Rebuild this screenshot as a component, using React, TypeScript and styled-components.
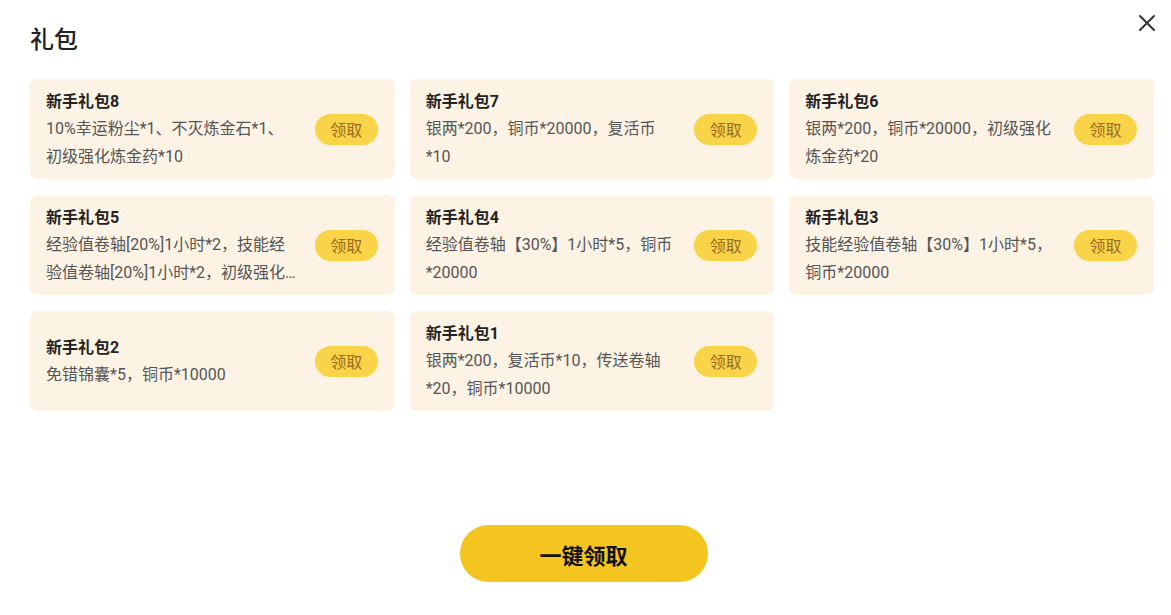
import * as React from "react";
import styled, { createGlobalStyle } from "styled-components";

const GlobalStyle = createGlobalStyle`
  html, body {
    margin: 0;
    padding: 0;
    background: #ffffff;
  }
  body {
    font-family: Roboto, "Noto Sans CJK SC", "Noto Sans", sans-serif;
    color: #222222;
  }
`;

const Page = styled.div`
  position: relative;
  box-sizing: border-box;
  min-height: 100vh;
  display: flex;
  flex-direction: column;
  padding: 24px 17px 33px 30px;
`;

const Header = styled.h1`
  margin: 0 0 23px;
  font-size: 24px;
  line-height: 32px;
  font-weight: 500;
  color: #222222;
`;

const CloseButton = styled.button`
  position: absolute;
  top: 13px;
  right: 14px;
  width: 20px;
  height: 20px;
  padding: 0;
  border: 0;
  background: transparent;
  display: flex;
  align-items: center;
  justify-content: center;
  cursor: pointer;
`;

const Grid = styled.div`
  display: grid;
  grid-template-columns: repeat(3, 1fr);
  column-gap: 15px;
  row-gap: 16px;
`;

const Card = styled.div`
  box-sizing: border-box;
  height: 100px;
  display: flex;
  align-items: center;
  padding: 2px 17px 0 16px;
  background-color: #fcf3e5;
  border-radius: 7px;
`;

const Info = styled.div`
  flex: 0 1 250px;
  min-width: 0;
`;

const Name = styled.div`
  font-size: 16px;
  line-height: 26px;
  font-weight: 700;
  color: #222222;
`;

const Desc = styled.div`
  font-size: 16px;
  line-height: 28px;
  color: #555555;
  display: -webkit-box;
  -webkit-line-clamp: 2;
  -webkit-box-orient: vertical;
  overflow: hidden;
`;

const ClaimButton = styled.button`
  flex: 0 0 auto;
  margin-left: auto;
  margin-bottom: 2px;
  width: 63px;
  height: 31px;
  padding: 0;
  border: 0;
  border-radius: 16px;
  background-color: #f9d348;
  color: #9a6d1e;
  font-family: inherit;
  font-size: 16px;
  cursor: pointer;
`;

const Footer = styled.div`
  margin-top: auto;
  display: flex;
  justify-content: center;
  padding-right: 17px;
`;

const ClaimAll = styled.button`
  width: 248px;
  height: 57px;
  border: 0;
  border-radius: 29px;
  background-color: #f4c420;
  color: #111111;
  font-family: inherit;
  font-size: 22px;
  font-weight: 700;
  cursor: pointer;
`;

type Gift = { name: string; desc: string };

const gifts: Gift[] = [
  { name: "新手礼包8", desc: "10%幸运粉尘*1、不灭炼金石*1、初级强化炼金药*10" },
  { name: "新手礼包7", desc: "银两*200，铜币*20000，复活币*10" },
  { name: "新手礼包6", desc: "银两*200，铜币*20000，初级强化炼金药*20" },
  {
    name: "新手礼包5",
    desc: "经验值卷轴[20%]1小时*2，技能经验值卷轴[20%]1小时*2，初级强化炼金药*10",
  },
  { name: "新手礼包4", desc: "经验值卷轴【30%】1小时*5，铜币*20000" },
  { name: "新手礼包3", desc: "技能经验值卷轴【30%】1小时*5，铜币*20000" },
  { name: "新手礼包2", desc: "免错锦囊*5，铜币*10000" },
  { name: "新手礼包1", desc: "银两*200，复活币*10，传送卷轴*20，铜币*10000" },
];

export default function App() {
  return (
    <>
      <GlobalStyle />
      <Page>
        <Header>礼包</Header>
        <CloseButton aria-label="关闭">
          <svg width="18" height="18" viewBox="0 0 18 18">
            <path d="M2 2 L16 16 M16 2 L2 16" stroke="#333" strokeWidth="2" strokeLinecap="round" />
          </svg>
        </CloseButton>
        <Grid>
          {gifts.map((g) => (
            <Card key={g.name}>
              <Info>
                <Name>{g.name}</Name>
                <Desc>{g.desc}</Desc>
              </Info>
              <ClaimButton>领取</ClaimButton>
            </Card>
          ))}
        </Grid>
        <Footer>
          <ClaimAll>一键领取</ClaimAll>
        </Footer>
      </Page>
    </>
  );
}
